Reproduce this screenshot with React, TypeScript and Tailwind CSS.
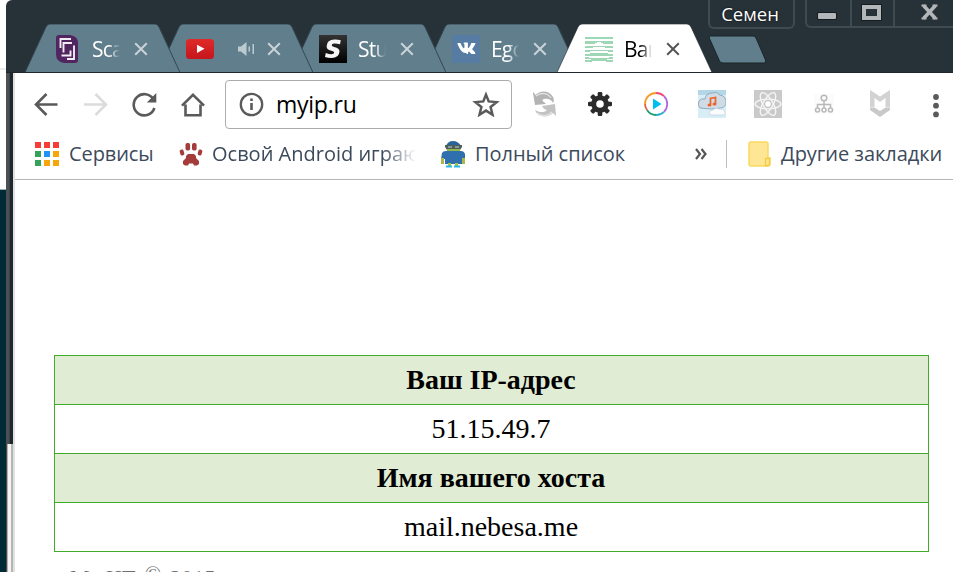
import type { ReactNode } from "react";

const ui = "font-['Open_Sans','Noto_Sans',sans-serif]";

function CloseIcon({ color }: { color: string }) {
  return (
    <svg className="h-[14px] w-[14px] shrink-0" viewBox="0 0 14 14" fill="none" stroke={color} strokeWidth="2">
      <path d="M1.2 1.2 12.8 12.8M12.8 1.2 1.2 12.8" />
    </svg>
  );
}

function ScalaIcon() {
  return (
    <svg className="h-7 w-7" viewBox="0 0 28 28" fill="none">
      <path d="M3 0H17Q25 1 25 8V25Q25 28 22 28H11Q3 27 3 19V3Q3 0 6 0Z" fill="#51255f" />
      <path d="M7.5 13V4H18M10.500 17.500V8H19M21 10.500V24H14M17.500 15.500V20.500H8.500" stroke="#f2edf4" strokeWidth="1.9" />
    </svg>
  );
}

function YoutubeIcon() {
  return (
    <svg className="h-7 w-7" viewBox="0 0 28 28">
      <defs>
        <linearGradient id="yt" x1="0" y1="0" x2="0" y2="1">
          <stop stopColor="#e02a29" />
          <stop offset="1" stopColor="#c4161c" />
        </linearGradient>
      </defs>
      <rect y="4" width="28" height="20" rx="3.500" fill="url(#yt)" />
      <path d="m11 9.700 7.500 4.100-7.500 4.100Z" fill="#fff" />
    </svg>
  );
}

function StudioIcon() {
  return (
    <svg className="h-7 w-7" viewBox="0 0 28 28">
      <defs>
        <linearGradient id="st" x1="0" y1="0" x2="0" y2="1">
          <stop stopColor="#333" />
          <stop offset="1" stopColor="#000" />
        </linearGradient>
      </defs>
      <rect width="28" height="28" fill="url(#st)" />
      <path d="M21.800 5.300 21 9.300Q17.500 8.300 15 8.500 12.700 8.800 12.700 10.200 12.700 11.400 15.200 11.900 20.700 12.900 20.500 16.600 20.200 23 12.500 23 8.800 23 6 22L6.800 18Q10 19.300 12.500 19.300 15 19.200 15.200 17.600 15.300 16.400 12.300 15.800 7.500 14.800 7.600 11.300 7.900 4.800 15.500 4.600 19 4.500 21.800 5.300Z" fill="#f5f5f5" />
    </svg>
  );
}

function VkIcon() {
  return (
    <svg className="h-7 w-7" viewBox="0 0 28 28">
      <rect width="28" height="28" rx="2" fill="#567ca4" />
      <path d="M13.300 19.200h1.200s.4 0 .5-.3c.2-.2.2-.6.200-.6s0-1.700.8-2c.8-.200 1.800 1.700 2.900 2.400.8.600 1.400.5 1.400.5h2.900s1.500-.1.800-1.300c-.1-.1-.5-.9-2.300-2.600-1.900-1.800-1.700-1.500.6-4.600 1.400-1.900 2-3 1.800-3.500-.2-.4-1.200-.3-1.200-.3h-3.200s-.3 0-.5.1-.3.4-.3.4-.5 1.400-1.200 2.600c-1.500 2.500-2 2.600-2.300 2.500-.6-.4-.4-1.500-.4-2.300 0-2.500.4-3.500-.7-3.800-.4-.1-.7-.1-1.600-.1-1.200 0-2.200 0-2.800.3-.4.200-.7.600-.5.600.2 0 .8.100 1 .5.400.5.400 1.600.4 1.600s.2 3-.5 3.400c-.5.300-1.200-.3-2.700-2.600-.7-1.200-1.300-2.600-1.300-2.600s-.2-.6-.8-.6H2.900s-.5 0-.6.2c-.1.200 0 .6 0 .6s2.300 5.400 4.900 8.100c2.300 2.400 5 2.300 6.100 2.300Z" fill="#fff" transform="translate(3.600 1.800) scale(.82 .9)" />
    </svg>
  );
}

function GreenIcon() {
  return (
    <svg className="h-7 w-7" viewBox="0 0 28 28">
      <g fill="#9dd7b5" shapeRendering="crispEdges">
        <path d="M0 2h28v2H0zM0 6h28v3H18V8h-2V7h-4v1h-2v1H0zM0 11h28v2H20v-1H8v1H0zM0 15h28v2H23v-1H5v1H0zM0 19h5v-1h18v1h5v2H0zM0 22h4v1h20v-1h4v2H0zM0 25h6v-1h16v1h6v2h-7v-1H7v1H0z" />
      </g>
    </svg>
  );
}

function Speaker() {
  return (
    <svg className="ml-[13px] h-[14px] w-[17px]" viewBox="0 0 17 14" fill="#bdcbd1">
      <path d="M0 4.500h3L8.500 0v14L3 9.500H0zM10.500 4.500h1.500v5h-1.500zM14.500 2H16v10h-1.500z" />
    </svg>
  );
}

type TabProps = { icon: ReactNode; title: string; audio?: boolean; active?: boolean; layer: string };

function Tab({ icon, title, audio, active, layer }: TabProps) {
  return (
    <div className={`relative -mr-[22px] flex h-[49px] w-[155px] shrink-0 items-center pl-7 ${layer}`}>
      <svg className="absolute inset-0 -z-10 h-[49px] w-[155px]" viewBox="0 0 155 49">
        <path
          d="M0 48.500 L21 3 Q22.500 0 25 0 H130 Q132.500 0 134 3 L155 48.500Z"
          fill={active ? "#fff" : "#617e8c"}
          stroke={active ? "#1c2529" : "#344750"}
          strokeWidth={active ? 0.6 : 1}
        />
        {active && <path d="M0 48H155V49H0Z" fill="#fff" />}
      </svg>
      {icon}
      {audio ? (
        <div className="ml-[11px] w-7">
          <Speaker />
        </div>
      ) : (
        <div
          className={`ml-[11px] h-[30px] w-[28px] overflow-hidden whitespace-nowrap text-[21px] tracking-[-0.8px] leading-[30px] [mask-image:linear-gradient(to_right,#000_60%,transparent)] ${active ? "text-black" : "text-white"}`}
        >
          {title}
        </div>
      )}
      <div className="ml-[14px]">
        <CloseIcon color={active ? "#555" : "#c9d3d8"} />
      </div>
    </div>
  );
}

function TitleBar() {
  return (
    <div className="flex h-[73px] items-start overflow-hidden rounded-tl-md border-b border-[#1d272c] bg-[#263238] pl-[19px]">
      <div className="isolate flex pt-6">
        <Tab icon={<ScalaIcon />} title="Scala" layer="z-[4]" />
        <Tab icon={<YoutubeIcon />} title="" audio layer="z-[3]" />
        <Tab icon={<StudioIcon />} title="Stud" layer="z-[2]" />
        <Tab icon={<VkIcon />} title="Egor" layer="z-[1]" />
        <Tab icon={<GreenIcon />} title="Ваш" active layer="z-[5]" />
      </div>
      <svg className="ml-[18px] mt-[35px] h-[29px] w-[60px] shrink-0" viewBox="0 0 60 29">
        <path d="M2.500 1H45Q47 1 48 3L57.500 25Q58.500 28 56 28H15Q12.500 28 11.500 26L1.500 3.500Q.5 1 2.500 1Z" fill="#617e8c" stroke="#1b2428" />
      </svg>
      <div className="-ml-[60px] flex h-[29px] w-[87px] shrink-0 items-center justify-center rounded-b-md border-2 border-t-0 border-[#3f4b51] pr-[3px] text-[18.500px] text-white [text-shadow:0_0_2px_#000]">
        Семен
      </div>
      <div className="ml-[10px] flex h-[28px] w-[150px] shrink-0 rounded-bl-md border-b-2 border-l-2 border-[#3f4b51]">
        <div className="flex w-[45px] items-center border-r-2 border-[#3f4b51] pl-[11px] pt-[6px]">
          <div className="h-[6px] w-[18px] rounded-[1px] bg-[#b4b7b9] ring-1 ring-[#151c20]" />
        </div>
        <div className="flex w-[43px] items-center border-r-2 border-[#3f4b51] pb-[2px] pl-[10px]">
          <div className="h-[15px] w-[19px] border-4 border-[#b4b7b9] ring-1 ring-[#151c20]" />
        </div>
        <svg className="ml-[26px] mt-[4px] h-4 w-[17px]" viewBox="0 0 17 16" fill="none" stroke="#b4b7b9" strokeWidth="3.500">
          <path d="M2.500 1.500 14.500 14.500M14.500 1.500 2.500 14.500" />
          <path d="M.5 1.500h5M11.500 1.500h5M.5 14.500h5M11.500 14.500h5" strokeWidth="2" />
        </svg>
      </div>
    </div>
  );
}

function NavIcon({ children, color = "#5a5a5a" }: { children: ReactNode; color?: string }) {
  return (
    <div className="flex w-[49px] shrink-0 justify-center">
      <svg className="h-[26px] w-[26px]" viewBox="0 0 26 26" fill="none" stroke={color} strokeWidth="2.600">
        {children}
      </svg>
    </div>
  );
}

function Ext({ children }: { children: ReactNode }) {
  return (
    <div className="flex w-[56px] shrink-0 justify-center">
      <svg className="h-7 w-7" viewBox="0 0 28 28">
        {children}
      </svg>
    </div>
  );
}

const teeth = [0, 45, 90, 135, 180, 225, 270, 315];

function Toolbar() {
  return (
    <div className="flex h-[62px] items-center overflow-hidden pl-[6px]">
      <NavIcon>
        <path d="M24.500 13.500H3M13.500 3 3 13.500l10.500 10.500" />
      </NavIcon>
      <NavIcon color="#dcdcdc">
        <path d="M2 13.500h22M13.500 3 24 13.500 13.500 24" />
      </NavIcon>
      <NavIcon>
        <path d="M22.500 8.500A10.600 10.600 0 1 0 23.400 17" />
        <path d="M25.300 2v9.500h-9.500Z" fill="#5a5a5a" stroke="none" />
      </NavIcon>
      <NavIcon>
        <path d="M2 14.700 13 3.800l11 10.900M5.500 13.500v10.800h15V13.500" />
      </NavIcon>
      <div className="ml-2 flex h-[49px] w-[287px] shrink-0 items-center rounded-[4px] border border-[#acacac] pl-[13px]">
        <svg className="h-[26px] w-[26px]" viewBox="0 0 26 26" fill="none" stroke="#5a5a5a" strokeWidth="2.300">
          <circle cx="12.500" cy="13.500" r="10.700" />
          <path d="M12.500 12v7M12.500 7.500v2.500" strokeWidth="2.600" />
        </svg>
        <span className="ml-[11px] w-[190px] text-[23px] tracking-[-0.25px] leading-8 text-black">myip.ru</span>
        <svg className="ml-[6px] h-[26px] w-[28px]" viewBox="0 0 28 26" fill="none" stroke="#5a5a5a" strokeWidth="2.500">
          <path d="m14 3.600 2.700 6.800 7.900.7-6 4.900 1.900 7.700-6.500-4.100-6.500 4.100 1.900-7.700-6-4.900 7.900-.7Z" />
        </svg>
      </div>
      <div className="ml-[3.500px] flex">
        <Ext>
          <path d="M3.500 2l2 3C10 0 19 0 23 7c1 2 1 4 0 6-1-3-5-5-9-4-2 .5-2 2 0 3l2 2-11 1L3 3Z" fill="#b3b3b3" />
          <path d="M26 26l-3-3C18 28 8 28 5 20c3 2 8 3 11 1 1-1 0-2-2-2l-2-3 13-2 1 12Z" fill="#c2c2c2" />
          <path d="M6 6C11 2 18 3 21 8M7 23c5 4 12 3 15-1" fill="none" stroke="#e2e2e2" strokeWidth="1.300" />
        </Ext>
        <Ext>
          {teeth.map((a) => (
            <rect key={a} x="11.700" y="2" width="4.600" height="6" rx="1.200" fill="#2b2b2b" transform={`rotate(${a} 14 14)`} />
          ))}
          <circle cx="14" cy="14" r="6.300" fill="none" stroke="#2b2b2b" strokeWidth="5" />
        </Ext>
        <Ext>
          <g fill="none" strokeWidth="1.800">
            <path d="M3 14A11 11 0 0 1 14 3" stroke="#f79a29" />
            <path d="M14 3a11 11 0 0 1 8 3.200" stroke="#ee4b78" />
            <path d="M22 6.200A11 11 0 0 1 22 21.800" stroke="#b06ae0" />
            <path d="M22 21.800A11 11 0 0 1 14 25" stroke="#2aaecf" />
            <path d="M14 25A11 11 0 0 1 5 20" stroke="#1a9e77" />
            <path d="M5 20A11 11 0 0 1 3 14" stroke="#e75b3a" />
          </g>
          <path d="m11 8.500 8.500 5.500-8.500 5.500Z" fill="#00bff0" />
        </Ext>
        <Ext>
          <rect width="28" height="28" fill="#d8edf6" />
          <path d="M0 0h28v5H0Z" fill="#b4d7e7" />
          <path d="M2 18Q-1 15 1 11q2-3 6-2 1-6 7-6 5-2 8 2 6 1 6 7 0 5-5 6-10 2-21 0Z" fill="#cfdbe5" stroke="#88a6bb" strokeWidth=".9" />
          <path d="M11 24q0-4 4-4 2-3 6-1 4-1 6 3 1 3-3 3H14Z" fill="#fafcfd" stroke="#b8ccda" strokeWidth=".6" />
          <path d="M12.500 14.500V8.500l5-1v6" fill="none" stroke="#ec6428" strokeWidth="1.700" />
          <ellipse cx="11.500" cy="15" rx="2" ry="1.600" fill="#ec6428" />
          <ellipse cx="16.500" cy="14" rx="2" ry="1.600" fill="#ec6428" />
        </Ext>
        <Ext>
          <rect width="28" height="28" fill="#cacaca" />
          <g fill="none" stroke="#f5f5f5" strokeWidth="1.400">
            <ellipse cx="14" cy="14" rx="12.800" ry="4.900" />
            <ellipse cx="14" cy="14" rx="12.800" ry="4.900" transform="rotate(60 14 14)" />
            <ellipse cx="14" cy="14" rx="12.800" ry="4.900" transform="rotate(120 14 14)" />
          </g>
          <circle cx="14" cy="14" r="2.700" fill="#fff" />
        </Ext>
        <Ext>
          <rect x="4" y="4" width="20" height="20" fill="#fbfbfb" />
          <g fill="none" stroke="#b9b9b9" strokeWidth="1.500">
            <circle cx="14" cy="8" r="2.800" />
            <circle cx="7.500" cy="20" r="2" />
            <circle cx="14" cy="20" r="2" />
            <circle cx="20.500" cy="20" r="2" />
            <path d="M14 11v7M7.500 18V14.500h13V18" />
          </g>
        </Ext>
        <Ext>
          <path d="M4 0l10 6.500L24 0v17h-4.500V8L14 12 8.500 8v9H4Z" fill="#d3d3d3" />
          <path d="M4 17.500h4.500L14 21l5.500-3.500H24V20l-10 7-10-7Z" fill="#c9c9c9" />
        </Ext>
        <Ext>
          <circle cx="14" cy="7" r="2.900" fill="#5a5a5a" />
          <circle cx="14" cy="15.700" r="2.900" fill="#5a5a5a" />
          <circle cx="14" cy="24.400" r="2.900" fill="#5a5a5a" />
        </Ext>
      </div>
    </div>
  );
}

const appColors = [
  "bg-[#f43e37]", "bg-[#f43e37]", "bg-[#f43e37]",
  "bg-[#34a25a]", "bg-[#2293f7]", "bg-[#f6a609]",
  "bg-[#34a25a]", "bg-[#f6a609]", "bg-[#f6a609]",
];

function Bookmarks() {
  return (
    <div className="flex h-[45px] items-center border-b border-[#b5b5b5] pb-[7px] text-[20px] leading-7 whitespace-nowrap text-[#3c4a5c]">
      <div className="ml-5 grid w-6 shrink-0 grid-cols-3 gap-[3px]">
        {appColors.map((c, i) => (
          <div key={i} className={`h-[6px] ${c}`} />
        ))}
      </div>
      <span className="ml-[10px] w-[110px] shrink-0 tracking-[-0.1px]">Сервисы</span>
      <svg className="h-[26px] w-6 shrink-0" viewBox="0 0 24 26" fill="#a33c3a">
        <rect x="6.500" y="2" width="4.600" height="7.500" rx="1.800" />
        <rect x="13" y="2" width="4.600" height="7.500" rx="1.800" />
        <rect x="1" y="8.500" width="4" height="6" rx="1.600" transform="rotate(-15 3 11.500)" />
        <rect x="19" y="8.500" width="4" height="6" rx="1.600" transform="rotate(15 21 11.500)" />
        <path d="M9 13h6l2 2v2l3 3v3l-2 1.500h-3l-1-2h-4l-1 2H6L4 23v-3l3-3v-2Z" />
      </svg>
      <span className="ml-[9px] w-[204px] shrink-0 overflow-hidden [mask-image:linear-gradient(to_right,#000_84%,transparent)]">
        Освой Android играючи
      </span>
      <svg className="ml-[24px] h-7 w-[26px] shrink-0" viewBox="0 0 26 28">
        <path d="M6 6Q8 1 13 1t8 5Z" fill="#28649a" />
        <path d="M5 5h17v2l-2 3H7L5 7Z" fill="#4d5f5b" />
        <path d="M8 6h4v2H8ZM15 6h4v2h-4Z" fill="#88989a" />
        <path d="M7 9h13v2H7Z" fill="#91b842" />
        <path d="M2 13Q3 11 6 11h15q3 0 4 3v5h-3v5H5v-5H1Z" fill="#2f6fae" />
        <path d="M1 18h3v6H1ZM22 18h3v6h-3Z" fill="#a9b848" />
        <path d="M8 23h3v3H8ZM15 23h3v3h-3Z" fill="#a3c43e" />
        <path d="M6 25.500h6v2H6ZM14 25.500h6v2h-6Z" fill="#24b7e8" />
      </svg>
      <span className="ml-[9px] w-[220px] shrink-0 tracking-[-0.05px]">Полный список</span>
      <svg className="h-3 w-3 shrink-0" viewBox="0 0 12 12" fill="none" stroke="#555" strokeWidth="2.200">
        <path d="m1 1 4 5-4 5M6.500 1l4 5-4 5" />
      </svg>
      <div className="ml-[19px] h-7 w-px shrink-0 bg-[#bdbdbd]" />
      <svg className="ml-[21px] h-[26px] w-[23px] shrink-0" viewBox="0 0 23 26">
        <path d="M1 3Q1 1 3 1H18Q20 1 20 3V17H22V23Q22 25 20 25H3Q1 25 1 23Z" fill="#ffe694" stroke="#f8d960" strokeWidth="1.500" />
        <path d="M17.500 24.500v-7h4v5q0 2-2 2Z" fill="#ffe694" stroke="#f3cc45" strokeWidth="1.400" />
      </svg>
      <span className="ml-[10px] tracking-[-0.05px]">Другие закладки</span>
    </div>
  );
}

function Page() {
  return (
    <main className="flex-1 overflow-hidden pl-[39px] pt-[175px] font-['Liberation_Serif',serif] text-[28px] text-black">
      <table className="h-[197px] w-[875px] border-collapse text-center leading-8">
        <tbody>
          <tr className="h-[49px] bg-[#e0edd4]">
            <th className="border border-[#43ab2c] p-0 pr-px">Ваш IP-адрес</th>
          </tr>
          <tr className="h-[49px]">
            <td className="border border-[#43ab2c] p-0 pr-px">51.15.49.7</td>
          </tr>
          <tr className="h-[49px] bg-[#e0edd4]">
            <th className="border border-[#43ab2c] p-0 pr-px">Имя вашего хоста</th>
          </tr>
          <tr className="h-[49px]">
            <td className="border border-[#43ab2c] p-0 pr-px">mail.nebesa.me</td>
          </tr>
        </tbody>
      </table>
      <p className="ml-4 mt-[12px] flex text-[22px] leading-7 whitespace-nowrap text-[#6f6f6f]">
        <span className="w-[36px]">My</span>
        <span className="w-[39px]">HT</span>
        <span className="-mt-[4px] w-[25px] text-[21px]">©</span>
        <span className="tracking-[0.5px]">2015</span>
      </p>
    </main>
  );
}

export default function App() {
  return (
    <div className={`flex h-[572px] w-[953px] overflow-hidden bg-white ${ui}`}>
      <div className="flex w-[6px] shrink-0 flex-col">
        <div className="h-[68px]" />
        <div className="h-[2px] bg-[#ececec]" />
        <div className="h-[119px]" />
        <div className="h-px bg-[#9db0b6]" />
        <div className="flex-1 bg-[#002b36]" />
      </div>
      <div className="flex w-[947px] shrink-0 flex-col">
        <TitleBar />
        <div className="flex min-h-0 flex-1">
          <div className="flex w-[7px] shrink-0 flex-col">
            <div className="flex h-[371px]">
              <div className="w-[3px] bg-[#4d4f50]" />
              <div className="w-px bg-[#344654]" />
              <div className="w-[3px] bg-[#20282d]" />
            </div>
            <div className="flex flex-1">
              <div className="w-px bg-[#4b4b4b]" />
              <div className="w-px bg-[#b8aea9]" />
              <div className="w-[3px] bg-[#f4f4f4]" />
              <div className="w-[2px] bg-[#b4b4b4]" />
            </div>
          </div>
          <div className="w-[2px] shrink-0 bg-[#e1e1e1]" />
          <div className="flex w-[938px] shrink-0 flex-col">
            <Toolbar />
            <Bookmarks />
            <Page />
          </div>
        </div>
      </div>
    </div>
  );
}
